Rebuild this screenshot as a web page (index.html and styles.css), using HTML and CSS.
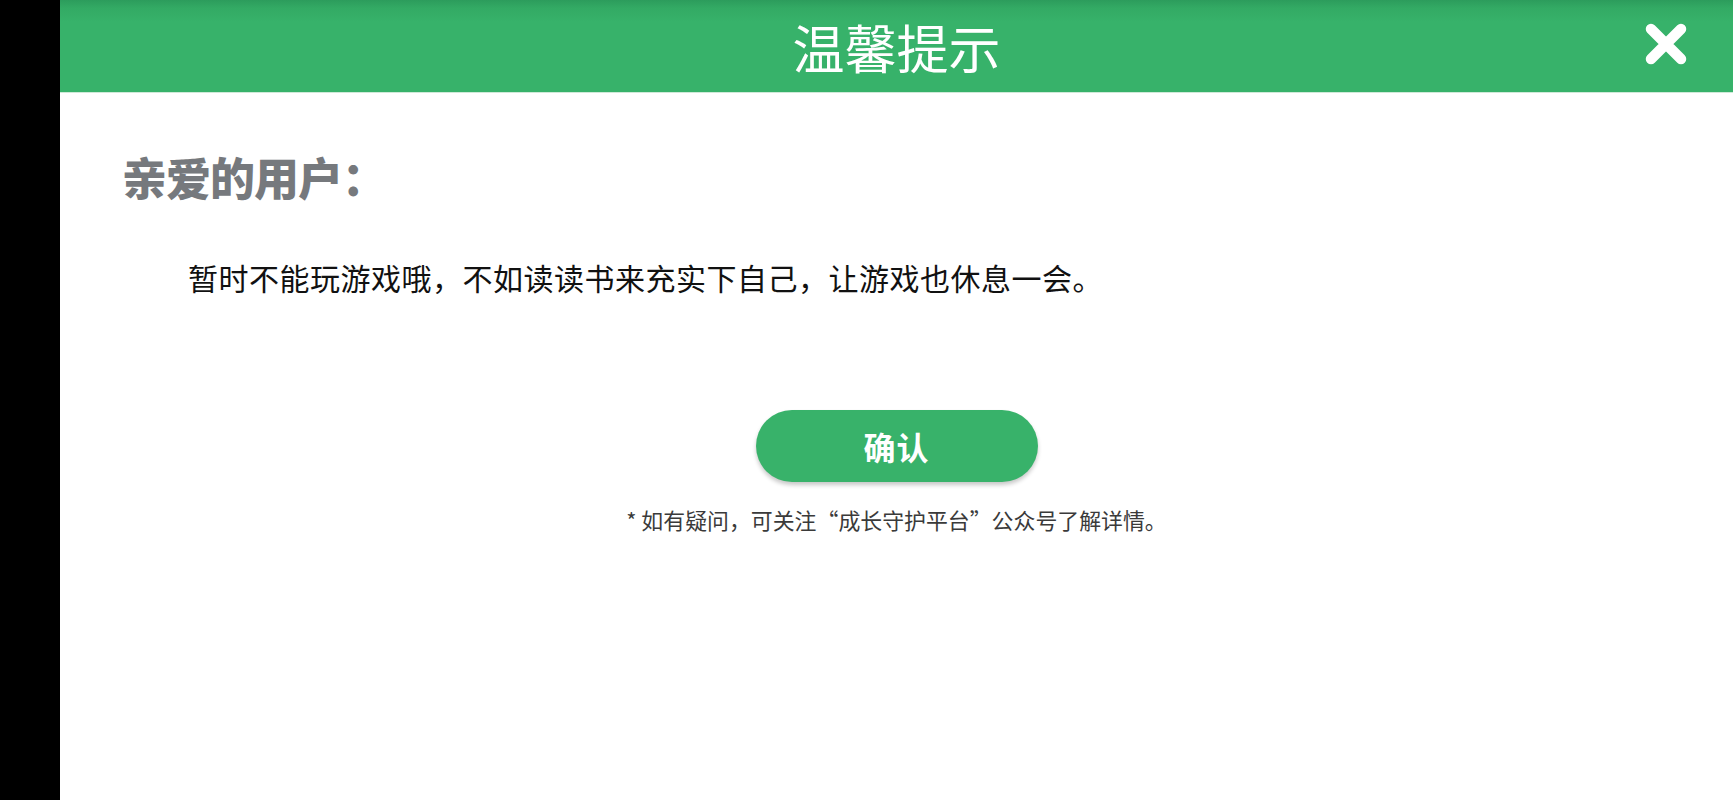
FILE: index.html
```html
<!DOCTYPE html>
<html lang="zh-CN">
<head>
<meta charset="utf-8">
<title>温馨提示</title>
<link rel="stylesheet" href="styles.css">
</head>
<body>
<div class="screen">
  <div class="side"></div>
  <div class="dialog">
    <header class="bar">
      <h1 class="title">温馨提示</h1>
      <button class="close" aria-label="关闭">
        <svg viewBox="0 0 46 46" width="46" height="46">
          <path d="M8 8 L38 38 M38 8 L8 38" stroke="#fff" stroke-width="10.5" stroke-linecap="round" fill="none"/>
        </svg>
      </button>
    </header>
    <main class="content">
      <h2 class="greet">亲爱的用户：</h2>
      <p class="msg">暂时不能玩游戏哦，不如读读书来充实下自己，让游戏也休息一会。</p>
      <div class="actions">
        <button class="ok">确认</button>
        <p class="note">* 如有疑问，可关注“成长守护平台”公众号了解详情。</p>
      </div>
    </main>
  </div>
</div>
</body>
</html>
```

FILE: styles.css
```css
html, body {
  margin: 0;
  padding: 0;
  height: 100%;
  background: #fff;
  font-family: "Noto Sans CJK SC", "Noto Sans", sans-serif;
}
.screen {
  display: flex;
  width: 1733px;
  height: 800px;
  overflow: hidden;
}
.side {
  width: 60px;
  flex: 0 0 60px;
  background: #000;
}
.dialog {
  flex: 1;
  display: flex;
  flex-direction: column;
  background: #fff;
}
.bar {
  position: relative;
  height: 93px;
  flex: 0 0 93px;
  background: linear-gradient(to bottom, #2c9c5c 0px, #33aa64 8px, #37b26a 22px, #37b26a 100%);
  border-bottom: 1px solid #cfe9d8;
  box-sizing: border-box;
  display: flex;
  align-items: center;
  justify-content: center;
}
.title {
  margin: 0;
  color: #fff;
  font-weight: 400;
  font-size: 52px;
  line-height: 1;
  letter-spacing: 0;
  transform: translateY(1px);
}
.close {
  position: absolute;
  right: 44px;
  top: 21px;
  width: 46px;
  height: 46px;
  padding: 0;
  border: 0;
  background: none;
  cursor: pointer;
}
.close svg { display: block; }
.content {
  flex: 1;
  padding: 52px 0 0 0;
}
.greet {
  margin: 0 0 0 62px;
  color: #76797d;
  font-size: 45px;
  font-weight: 900;
  line-height: 64px;
  letter-spacing: -1px;
}
.msg {
  margin: 48px 0 0 128px;
  color: #111;
  font-size: 30px;
  line-height: 40px;
  letter-spacing: 0.5px;
}
.actions {
  margin-top: 113px;
  display: flex;
  flex-direction: column;
  align-items: center;
}
.ok {
  width: 282px;
  height: 72px;
  border: 0;
  border-radius: 36px;
  background: #38b26a;
  box-shadow: 0 3px 4px rgba(0,0,0,0.22);
  color: #fff;
  font-family: inherit;
  font-size: 32px;
  font-weight: 700;
  letter-spacing: 1px;
  cursor: pointer;
}
.note {
  margin: 24px 0 0 0;
  color: #3a3a3a;
  font-size: 21.9px;
  line-height: 28px;
}
```
